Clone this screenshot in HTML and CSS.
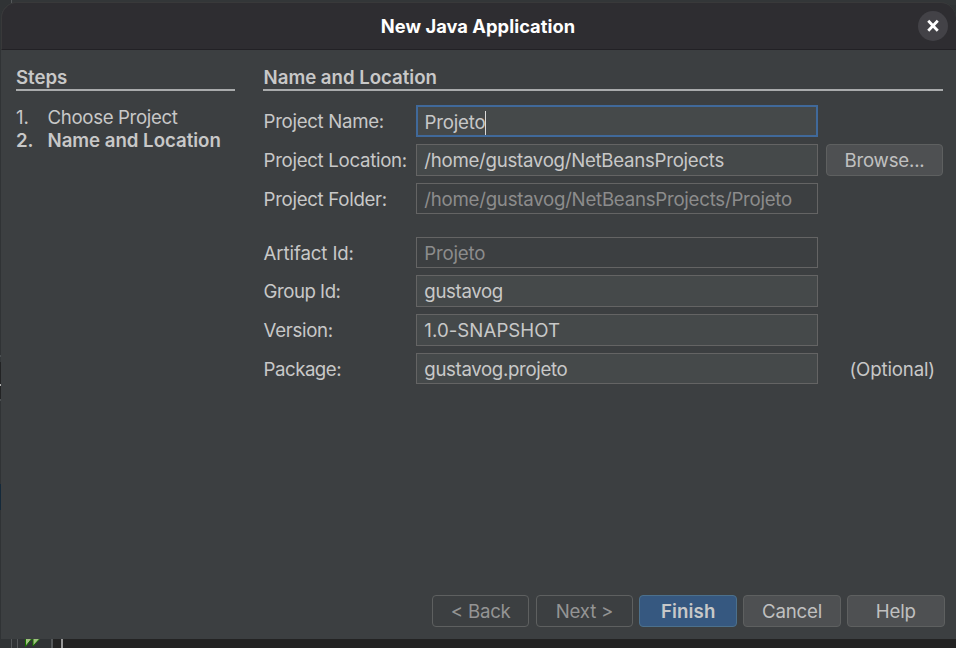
FILE: index.html
```html
<!DOCTYPE html>
<html lang="en">
<head>
<meta charset="utf-8">
<title>New Java Application</title>
<link rel="stylesheet" href="styles.css">
</head>
<body>
<div class="edge"></div>
<main class="dialog">
  <header class="titlebar">
    <h1>New Java Application</h1>
    <button class="close" aria-label="Close"><svg width="30" height="30" viewBox="0 0 30 30"><path d="M11.2 10.8L18.8 18.8M18.8 10.8L11.2 18.8" stroke="#fff" stroke-width="2.8" stroke-linecap="square"/></svg></button>
  </header>
  <div class="content">
    <aside class="steps">
      <h2>Steps</h2>
      <ol>
        <li><span class="num">1.</span><span>Choose Project</span></li>
        <li class="current"><span class="num">2.</span><span>Name and Location</span></li>
      </ol>
    </aside>
    <section class="panel">
      <h2>Name and Location</h2>
      <div class="form">
        <label>Project Name:</label><div class="field focus">Projeto<i class="caret"></i></div><span></span>
        <label>Project Location:</label><div class="field path">/home/gustavog/NetBeansProjects</div><button class="btn browse">Browse...</button>
        <label>Project Folder:</label><div class="field disabled path-long">/home/gustavog/NetBeansProjects/Projeto</div><span></span>
        <label class="artifact">Artifact Id:</label><div class="field disabled short">Projeto</div><span></span>
        <label class="tight">Group Id:</label><div class="field">gustavog</div><span></span>
        <label>Version:</label><div class="field version">1.0-SNAPSHOT</div><span></span>
        <label class="tight">Package:</label><div class="field last">gustavog.projeto</div><span class="optional">(Optional)</span>
      </div>
    </section>
  </div>
  <footer class="actions">
    <button class="btn off">&lt; Back</button>
    <button class="btn off">Next &gt;</button>
    <button class="btn primary">Finish</button>
    <button class="btn">Cancel</button>
    <button class="btn">Help</button>
  </footer>
</main>
<div class="behind"><div class="gutter"><svg width="16" height="9" viewBox="0 0 16 9"><path d="M1.5-1V7.5L7.5 0V-1ZM9-1V7L15.5 0V-1Z" fill="#a0c080" stroke="#167000"/></svg></div><div class="bar"></div></div>
</body>
</html>
```
FILE: styles.css
```css
* { box-sizing: border-box; }
body {
  margin: 0;
  width: 956px;
  height: 648px;
  overflow: hidden;
  background: linear-gradient(90deg, #303335 11px, #55585a 11px 12px, #333638 12px) 0 0 / 100% 5px no-repeat, #303335;
  font-family: Inter, "Liberation Sans", sans-serif;
  font-size: 18.67px;
  color: #c8c8c8;
  padding-top: 2px;
}
.edge {
  position: absolute;
  left: 0;
  top: 355px;
  width: 1px;
  height: 157px;
  background: linear-gradient(#4b4f51 2px, #34383a 2px 7px, #222324 7px 29px, #b0b0b0 29px 31px, #222324 31px 44px, #4b4f51 44px 46px, #303335 46px 129px, #14293a 129px 155px, #303335 155px);
}
.dialog {
  margin-left: 1px;
  height: 637px;
  display: flex;
  flex-direction: column;
  background: #3c3f41;
  border-radius: 16px 16px 0 0;
  overflow: hidden;
}
.titlebar {
  height: 48px;
  flex: none;
  display: grid;
  grid-template-columns: 1fr auto 1fr;
  align-items: center;
  padding-right: 8px;
  background: #2e2d31;
  border: 1px solid #39393a;
  border-right: 0;
  border-bottom-color: #222125;
  border-radius: 16px 16px 0 0;
}
.titlebar h1 {
  grid-column: 2;
  margin: 0 -6px 0 0;
  font-size: 18.3px;
  font-weight: 700;
  line-height: 24px;
  letter-spacing: .04px;
  color: #fff;
}
.close {
  grid-column: 3;
  justify-self: end;
  width: 30px;
  height: 30px;
  padding: 0;
  border: 0;
  border-radius: 50%;
  background: #434247;
}
.close svg { display: block; }
.content {
  display: flex;
  gap: 28.5px;
  padding: 15px 13px 0 15px;
}
.steps { width: 218.5px; }
.panel { flex: 1; }
h2 {
  margin: 0;
  height: 26px;
  padding-left: .6px;
  line-height: 26px;
  font-size: 18.67px;
  font-weight: 600;
  letter-spacing: -.03px;
  border-bottom: 2px solid #a9abac;
}
.steps h2 { padding-left: 0; }
ol { list-style: none; margin: 14px 0 0; padding: 0; }
li { display: flex; height: 24px; line-height: 26px; letter-spacing: -.35px; }
.num { width: 31.5px; letter-spacing: 0; }
.current { line-height: 24px; font-weight: 600; letter-spacing: -.03px; }
.form {
  display: grid;
  grid-template-columns: 153px 402px 1fr;
  grid-template-rows: 39px 39px 54px 38px 39px 39px 39px;
  margin-top: 14px;
}
label { padding-left: .6px; line-height: 34px; letter-spacing: -.31px; white-space: nowrap; }
.tight { letter-spacing: -.5px; }
.artifact { letter-spacing: -.12px; }
.field {
  height: 32px;
  padding-left: 7.3px;
  line-height: 32px;
  border: 1px solid #646464;
  background: #45494a;
  letter-spacing: -.35px;
  white-space: nowrap;
}
.focus { border: 2px solid #40699a; padding-left: 6.5px; line-height: 31px; letter-spacing: -.2px; }
.disabled { height: 31px; background: transparent; color: #8c8c8c; }
.last { height: 31px; }
.short { letter-spacing: -.2px; }
.path { letter-spacing: -.28px; }
.path-long { letter-spacing: -.25px; }
.version { letter-spacing: .05px; }
.caret { display: inline-block; width: 1px; height: 24px; vertical-align: -6px; background: #dadada; }
.btn {
  width: 97.6px;
  height: 32px;
  padding: 1px 0 0;
  border: 1px solid #5e6060;
  border-radius: 4px;
  background: #4e5052;
  font: inherit;
  letter-spacing: -.2px;
  line-height: 30px;
  color: #c0c0c0;
}
.browse { width: 117px; margin-left: 8px; }
.optional { padding-left: 31.4px; line-height: 34px; letter-spacing: -.15px; }
.actions {
  display: flex;
  justify-content: flex-end;
  gap: 6.2px;
  margin-top: auto;
  padding: 0 11.4px 12px;
}
.off { background: transparent; color: #949494; }
.primary { background: #365880; border-color: #4c708c; font-weight: 600; color: #c8c8c8; letter-spacing: .15px; }
.behind {
  display: flex;
  height: 9px;
  background: #232323;
}
.gutter {
  width: 53px;
  padding-left: 24px;
  background: linear-gradient(90deg, #303335 11px, #55585a 11px 12px, #303335 12px 17px, #55585a 17px 18px, #303335 18px 51px, #55585a 51px);
}
.gutter svg { display: block; }
.bar { width: 2px; margin-left: 8px; background: #999; }
```
